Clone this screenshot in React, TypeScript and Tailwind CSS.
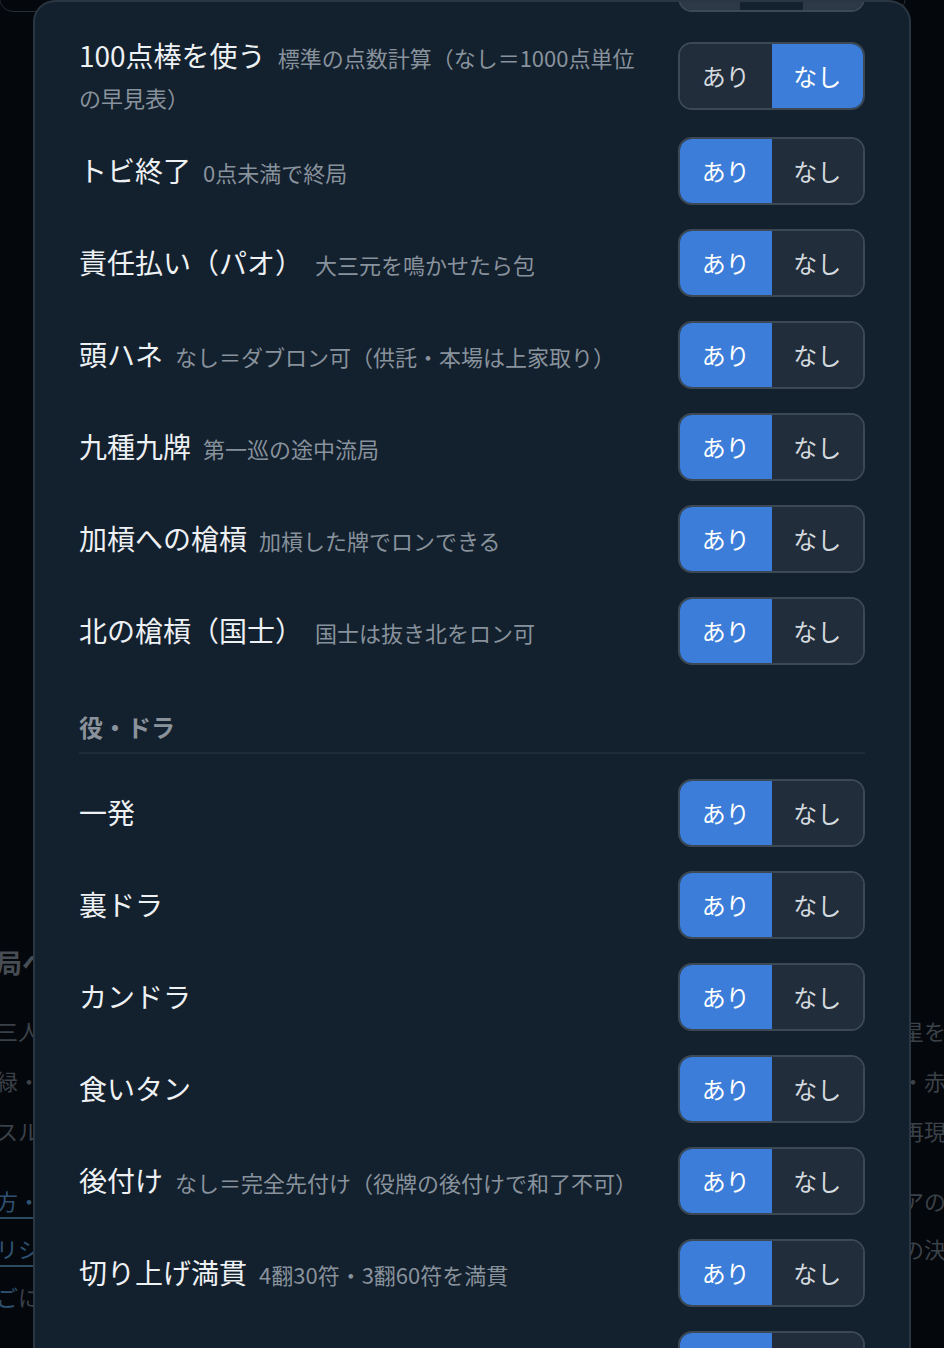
const font = { fontFamily: '"Noto Sans CJK JP", "Noto Sans", sans-serif' };

type Rule = { label: string; note?: string; on: boolean };

const basicRules: Rule[] = [
  { label: "100点棒を使う", note: "標準の点数計算（なし＝1000点単位の早見表）", on: false },
  { label: "トビ終了", note: "0点未満で終局", on: true },
  { label: "責任払い（パオ）", note: "大三元を鳴かせたら包", on: true },
  { label: "頭ハネ", note: "なし＝ダブロン可（供託・本場は上家取り）", on: true },
  { label: "九種九牌", note: "第一巡の途中流局", on: true },
  { label: "加槓への槍槓", note: "加槓した牌でロンできる", on: true },
  { label: "北の槍槓（国士）", note: "国士は抜き北をロン可", on: true },
];

const yakuRules: Rule[] = [
  { label: "一発", on: true },
  { label: "裏ドラ", on: true },
  { label: "カンドラ", on: true },
  { label: "食いタン", on: true },
  { label: "後付け", note: "なし＝完全先付け（役牌の後付けで和了不可）", on: true },
  { label: "切り上げ満貫", note: "4翻30符・3翻60符を満貫", on: true },
  { label: "赤ドラ", on: true },
];

function Toggle({ on }: { on: boolean }) {
  return (
    <div className="flex h-[68px] w-[187px] shrink-0 overflow-hidden rounded-[14px] border-2 border-[#3d4855] text-[24px] leading-none">
      <button
        type="button"
        className={`flex flex-1 items-center justify-center ${on ? "bg-[#3b7dd8] text-white" : "bg-[#212d3b] text-[#d5dadf]"}`}
      >
        あり
      </button>
      <button
        type="button"
        className={`flex flex-1 items-center justify-center ${on ? "bg-[#212d3b] text-[#d5dadf]" : "bg-[#3b7dd8] text-white"}`}
      >
        なし
      </button>
    </div>
  );
}

function RuleRow({ rule }: { rule: Rule }) {
  return (
    <div className="flex items-center justify-between gap-6 py-3">
      <p className="-my-[4px] min-w-0 flex-1 pr-2 text-[22px] leading-[40px] text-[#88929c]">
        <span className="text-[28px] leading-[40px] text-[#eef1f4]">{rule.label}</span>
        {rule.note && <span className="ml-3">{rule.note}</span>}
      </p>
      <Toggle on={rule.on} />
    </div>
  );
}

function BackgroundPage() {
  const line = "flex justify-between whitespace-nowrap";
  return (
    <div className="-ml-[4px] w-[950px] text-[#3b4149]">
      <div className="-mt-8 ml-[3px] mr-10 h-[44px] rounded-b-[14px] border border-[#262d35]" />
      <h2 className="mt-[930px] text-[26px] font-bold leading-[40px] text-[#474d55]">局への移行</h2>
      <div className="mt-[23px] text-[22px] leading-[50px]">
        <div className={line}>
          <span>三人</span>
          <span>星を</span>
        </div>
        <div className={line}>
          <span>緑・</span>
          <span>・赤</span>
        </div>
        <div className={line}>
          <span>スル</span>
          <span>再現</span>
        </div>
      </div>
      <ul className="mt-[21px] text-[22px] leading-[48px]">
        <li className={line}>
          <span className="text-[#2f5273] underline decoration-[#2d4a63] underline-offset-[7px]">方・</span>
          <span>アの</span>
        </li>
        <li className={line}>
          <span className="text-[#2f5273] underline decoration-[#2d4a63] underline-offset-[7px]">リシ</span>
          <span>の決</span>
        </li>
        <li className={line}>
          <span>
            <span className="text-[#2f5273]">ご</span>に
          </span>
          <span />
        </li>
      </ul>
    </div>
  );
}

export default function App() {
  return (
    <div className="relative h-[1348px] overflow-hidden bg-[#04070b]" style={font}>
      <BackgroundPage />

      <div className="absolute bottom-0 left-[33px] top-0 w-[878px] overflow-hidden rounded-t-[22px] border-2 border-b-0 border-[#2a3642] bg-[#13202d] px-[44px]">
        <div className="flex h-[25px] justify-end">
          <div className="-mt-[58px] flex h-[68px] w-[187px] overflow-hidden rounded-[14px] border-2 border-[#3d4855]">
            <div className="w-[60px] bg-[#2d3946]" />
            <div className="flex-1 bg-[#142230]" />
            <div className="w-[60px] bg-[#2d3946]" />
          </div>
        </div>

        <div className="flex flex-col">
          {basicRules.map((rule) => (
            <RuleRow key={rule.label} rule={rule} />
          ))}
        </div>

        <div className="mb-[13px] border-b-2 border-[#1f2b37] pb-[9px] pt-[34px]">
          <h3 className="text-[24px] font-bold leading-[32px] text-[#8a939c]">役・ドラ</h3>
        </div>

        <div className="flex flex-col">
          {yakuRules.map((rule) => (
            <RuleRow key={rule.label} rule={rule} />
          ))}
        </div>
      </div>
    </div>
  );
}
